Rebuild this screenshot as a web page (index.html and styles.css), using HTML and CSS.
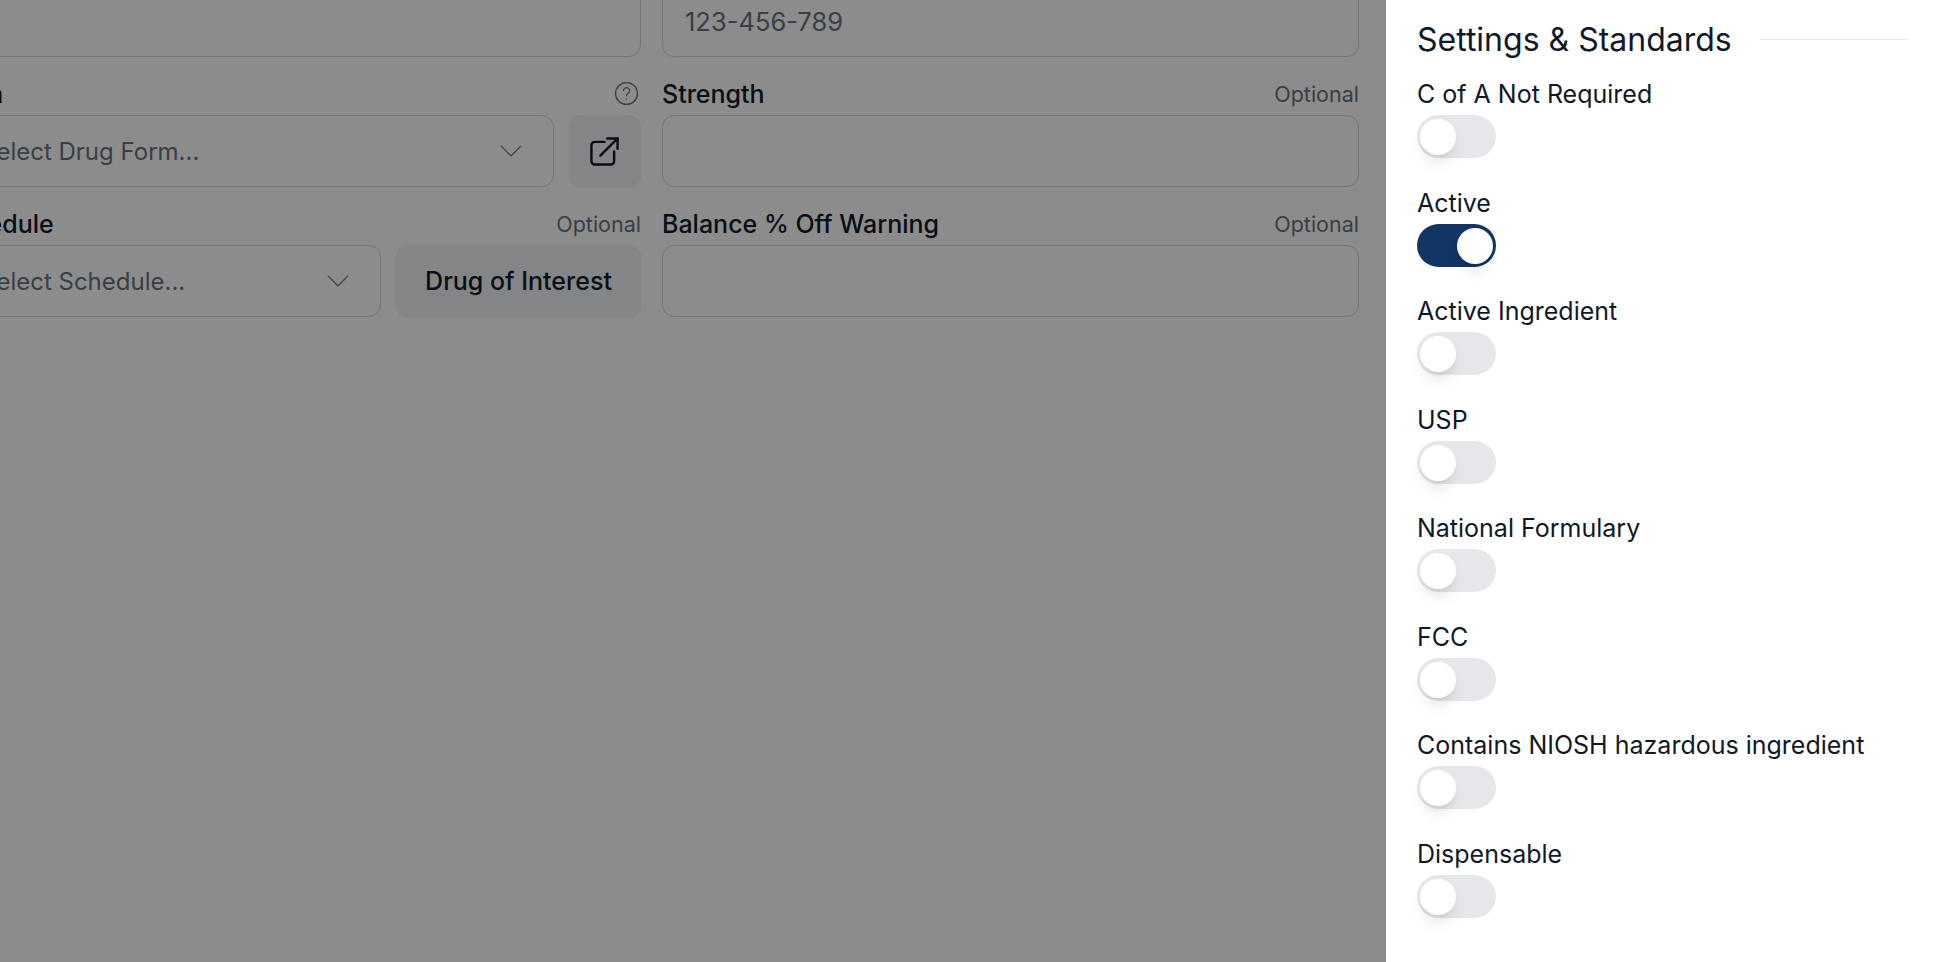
FILE: index.html
```html
<!DOCTYPE html>
<html lang="en">
<head>
    <meta charset="UTF-8">
    <meta name="viewport" content="width=device-width, initial-scale=1.0">
    <title>Settings &amp; Standards</title>
    <link rel="stylesheet" href="styles.css">
</head>
<body>
    <main class="form-grid">
        <div class="field first-row">
            <div class="input"></div>
        </div>
        <div class="field first-row">
            <div class="input placeholder number">123-456-789</div>
        </div>

        <div class="field">
            <div class="field-head">
                <label>Form</label>
                <svg class="help-icon" viewBox="0 0 24 24" fill="none" stroke="currentColor" stroke-width="1.25" stroke-linecap="round" stroke-linejoin="round">
                    <circle cx="12" cy="12" r="10.5"/>
                    <path d="M9.2 9.2a2.9 2.9 0 1 1 4.4 2.5c-.9.6-1.6 1.2-1.6 2.3"/>
                    <path d="M12 17.2v.1"/>
                </svg>
            </div>
            <div class="input-row">
                <div class="input select placeholder">
                    Select Drug Form...
                    <svg class="chevron" viewBox="0 0 24 24" fill="none" stroke="currentColor" stroke-width="1.25" stroke-linecap="round" stroke-linejoin="round"><path d="M3 7.500l9 9 9-9"/></svg>
                </div>
                <button class="btn btn-icon">
                    <svg viewBox="0 0 24 24" fill="none" stroke="currentColor" stroke-width="1.75" stroke-linecap="round" stroke-linejoin="round">
                        <path d="M12 5H5a2.500 2.500 0 0 0-2.500 2.500V19A2.500 2.500 0 0 0 5 21.500h11.500A2.500 2.500 0 0 0 19 19v-7"/>
                        <path d="M9 15L21.500 2.500"/>
                        <path d="M14 2.500h7.500V10"/>
                    </svg>
                </button>
            </div>
        </div>
        <div class="field">
            <div class="field-head">
                <label>Strength</label>
                <span class="optional">Optional</span>
            </div>
            <div class="input"></div>
        </div>

        <div class="field">
            <div class="field-head">
                <label>Schedule</label>
                <span class="optional">Optional</span>
            </div>
            <div class="input-row">
                <div class="input select placeholder">
                    Select Schedule...
                    <svg class="chevron" viewBox="0 0 24 24" fill="none" stroke="currentColor" stroke-width="1.25" stroke-linecap="round" stroke-linejoin="round"><path d="M3 7.500l9 9 9-9"/></svg>
                </div>
                <button class="btn btn-text">Drug of Interest</button>
            </div>
        </div>
        <div class="field">
            <div class="field-head">
                <label>Balance % Off Warning</label>
                <span class="optional">Optional</span>
            </div>
            <div class="input"></div>
        </div>
    </main>

    <div class="overlay"></div>

    <aside class="panel">
        <div class="panel-title">
            <h2>Settings &amp; Standards</h2>
            <span class="title-line"></span>
        </div>
        <div class="setting">
            <span>C of A Not Required</span>
            <div class="toggle"><i class="knob"></i></div>
        </div>
        <div class="setting">
            <span>Active</span>
            <div class="toggle on"><i class="knob"></i></div>
        </div>
        <div class="setting">
            <span>Active Ingredient</span>
            <div class="toggle"><i class="knob"></i></div>
        </div>
        <div class="setting">
            <span>USP</span>
            <div class="toggle"><i class="knob"></i></div>
        </div>
        <div class="setting">
            <span>National Formulary</span>
            <div class="toggle"><i class="knob"></i></div>
        </div>
        <div class="setting">
            <span>FCC</span>
            <div class="toggle"><i class="knob"></i></div>
        </div>
        <div class="setting">
            <span>Contains NIOSH hazardous ingredient</span>
            <div class="toggle"><i class="knob"></i></div>
        </div>
        <div class="setting">
            <span>Dispensable</span>
            <div class="toggle"><i class="knob"></i></div>
        </div>
    </aside>
</body>
</html>
```

FILE: styles.css
```css
* {
    margin: 0;
    padding: 0;
    box-sizing: border-box;
}

html, body {
    height: 100%;
    overflow: hidden;
}

body {
    font-family: Inter, "Liberation Sans", sans-serif;
    font-size: 25px;
    background: white;
    color: #111827;
}

/* the form behind the dimmed overlay, scrolled past the window edge */
.form-grid {
    display: grid;
    grid-template-columns: 699px 697px;
    column-gap: 21px;
    margin-left: -58px;
    margin-top: -15px;
}

.first-row .input {
    height: 72px;
}

.field-head {
    display: flex;
    justify-content: space-between;
    align-items: center;
    height: 36px;
    margin-top: 19px;
    margin-bottom: 3px;
}

.field-head label {
    font-weight: 500;
}

.optional {
    font-size: 21.5px;
    color: #6b7280;
}

.help-icon {
    width: 25px;
    height: 25px;
    color: #6b7280;
    margin-right: 2px;
    margin-top: -1px;
}

.input-row {
    display: flex;
    gap: 15px;
}

.input {
    height: 72px;
    border: 1px solid #d1d5db;
    border-radius: 12px;
    background: white;
    display: flex;
    align-items: center;
    padding: 0 22px;
}

.placeholder {
    color: #6b7280;
}

.number {
    font-size: 25.5px;
    padding-top: 1px;
}

.select {
    flex: 1;
    justify-content: space-between;
    font-size: 24px;
    padding-left: 38px;
}

.chevron {
    width: 26px;
    height: 26px;
    margin-right: 7px;
}

.btn {
    height: 72px;
    border: none;
    border-radius: 12px;
    background: #f1f2f4;
    color: #111827;
    font: inherit;
    font-weight: 500;
    box-shadow: 0 1px 2px rgba(0,0,0,0.05);
}

.btn-icon {
    width: 72px;
    display: flex;
    align-items: center;
    justify-content: center;
    padding-right: 1px;
}

.btn-icon svg {
    width: 33px;
    height: 33px;
}

.btn-text {
    width: 245px;
}

.overlay {
    position: fixed;
    inset: 0;
    background: rgba(0,0,0,0.45);
}

.panel {
    position: fixed;
    top: 0;
    right: 0;
    bottom: 0;
    width: 569px;
    background: white;
    padding: 0 48px 0 31px;
}

.panel-title {
    display: flex;
    align-items: center;
    gap: 28px;
    height: 78px;
}

.panel-title h2 {
    font-size: 32px;
    font-weight: 400;
    white-space: nowrap;
}

.title-line {
    flex: 1;
    height: 1px;
    background: #e5e7eb;
}

.setting {
    height: 108.5px;
}

.setting span {
    display: block;
    height: 37px;
    line-height: 32px;
}

.toggle {
    width: 79px;
    height: 43px;
    border-radius: 22px;
    background: #e5e7eb;
    padding: 4px 3px 3px;
}

.toggle.on {
    background: #123563;
    display: flex;
    justify-content: flex-end;
}

.knob {
    display: block;
    width: 36px;
    height: 36px;
    border-radius: 50%;
    background: white;
    box-shadow: 0 10px 15px -3px rgba(0,0,0,0.1), 0 4px 6px -4px rgba(0,0,0,0.1);
}
```
